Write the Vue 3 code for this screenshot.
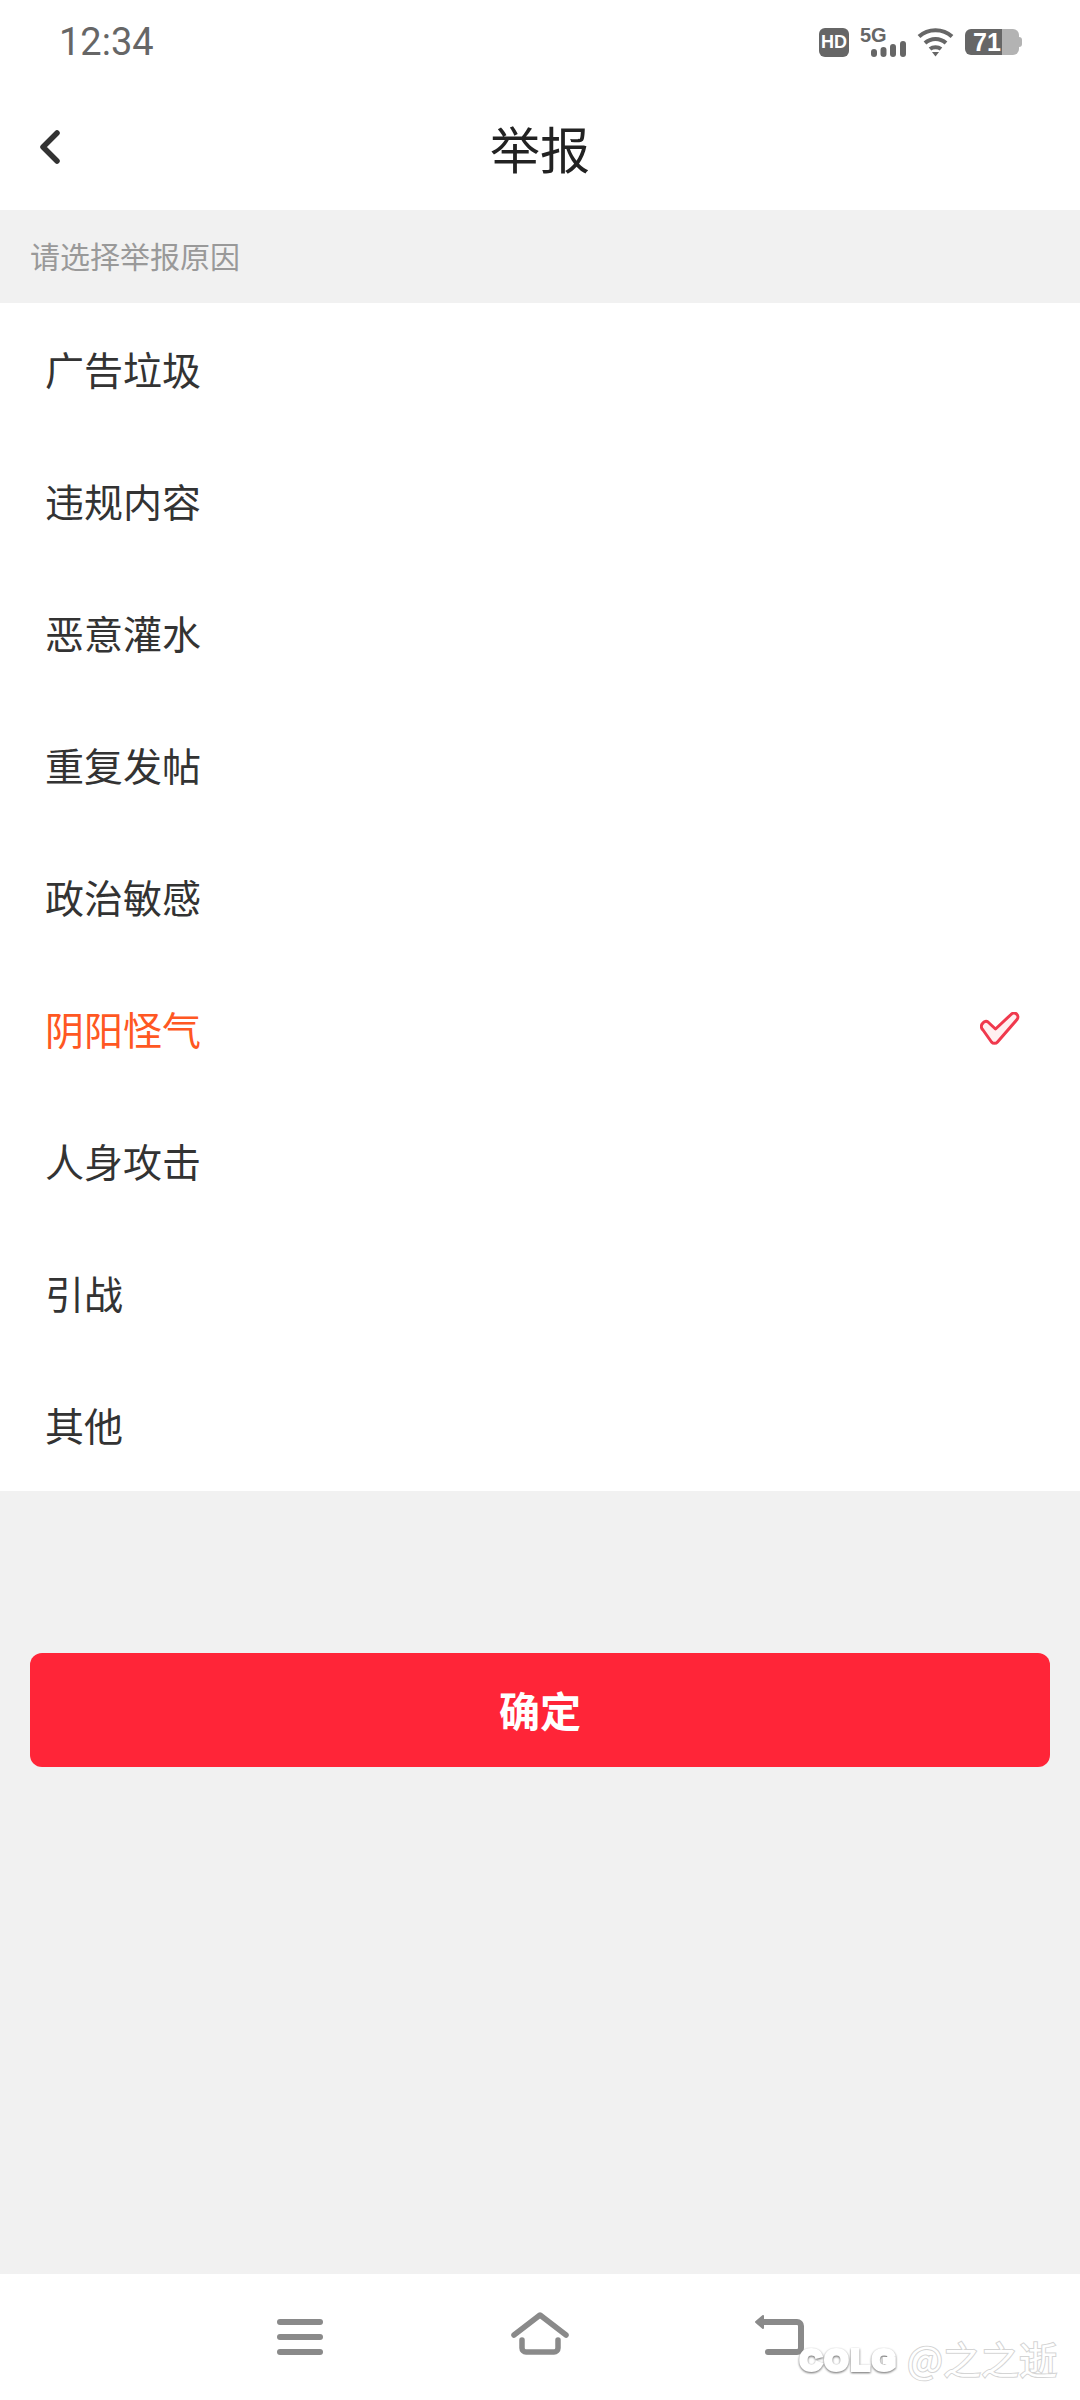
<script setup>
import { ref } from 'vue';

const reasons = ['广告垃圾', '违规内容', '恶意灌水', '重复发帖', '政治敏感', '阴阳怪气', '人身攻击', '引战', '其他'];
const selected = ref('阴阳怪气');
</script>

<template>
  <div class="page">
    <div class="status">
      <span class="time">12:34</span>
      <div class="status-icons">
        <span class="hd">HD</span>
        <div class="signal">
          <span class="five-g">5G</span>
          <svg class="bars" width="35" height="16" viewBox="0 0 35 16">
            <rect x="0" y="8" width="6" height="8" rx="3" />
            <rect x="9.500" y="6" width="6" height="10" rx="3" />
            <rect x="19" y="3" width="6" height="13" rx="3" />
            <rect x="29" y="0" width="6" height="16" rx="3" />
          </svg>
        </div>
        <svg class="wifi" width="37" height="30" viewBox="0 0 37 30" fill="none" stroke="#666" stroke-width="4">
          <path d="M2 9.500C11 1 26 1 35 9.500" />
          <path d="M8 16C14 10.500 23 10.500 29 16" />
          <path d="M13 22C16 19.500 21 19.500 24 22" />
          <path d="M15 25h7l-3.500 4.500z" fill="#666" stroke="none" />
        </svg>
        <div class="battery">
          <span class="level">71</span>
          <span class="cap"></span>
        </div>
      </div>
    </div>

    <header class="header">
      <svg class="back" width="22" height="34" viewBox="0 0 22 34" fill="none" stroke="#333" stroke-width="5.500" stroke-linecap="round" stroke-linejoin="round">
        <path d="M18 3L4 17l14 14" />
      </svg>
      <h1 class="title">举报</h1>
    </header>

    <main class="main">
      <div class="hint">请选择举报原因</div>
      <ul class="list">
        <li
          v-for="item in reasons"
          :key="item"
          :class="{ row: true, active: item === selected }"
          @click="selected = item"
        >
          <span class="label">{{ item }}</span>
          <svg v-if="item === selected" class="check" width="40" height="34" viewBox="0 0 40 34" fill="#fff0f1" stroke="#f0394d" stroke-width="3" stroke-linejoin="round">
            <path d="M3 11a3.500 3.500 0 0 1 5-1l7.500 7L31 2.500a3.500 3.500 0 0 1 6 5L17.500 30a4 4 0 0 1-6 0L3 18a4.500 4.500 0 0 1 0-7z" />
          </svg>
        </li>
      </ul>
      <button class="confirm" type="button">确定</button>
    </main>

    <nav class="nav">
      <svg width="60" height="50" viewBox="0 0 60 50" fill="#8a8a8a">
        <rect x="7" y="7" width="46" height="6" rx="3" />
        <rect x="7" y="22" width="46" height="6" rx="3" />
        <rect x="7" y="37" width="46" height="6" rx="3" />
      </svg>
      <svg width="60" height="50" viewBox="0 0 60 50" fill="none" stroke="#8a8a8a" stroke-width="5.500" stroke-linecap="round" stroke-linejoin="round">
        <path d="M4 23L30 3l26 20" />
        <path d="M12 28v8a4 4 0 0 0 4 4h28a4 4 0 0 0 4-4v-8" />
      </svg>
      <svg width="60" height="50" viewBox="0 0 60 50" fill="none" stroke="#8a8a8a" stroke-width="6" stroke-linecap="round" stroke-linejoin="round">
        <path d="M10 10h37a4 4 0 0 1 4 4v22a4 4 0 0 1-4 4H18" />
        <path d="M6 10l7-6v12z" fill="#8a8a8a" stroke-width="2" />
      </svg>
      <div class="watermark">
        <span class="colg">COLG</span>
        <span class="author">@之之逝</span>
      </div>
    </nav>
  </div>
</template>

<style scoped>
.page {
  width: 1080px;
  height: 2400px;
  display: flex;
  flex-direction: column;
  background: #fff;
  font-family: "Noto Sans CJK SC", "Noto Sans", sans-serif;
  overflow: hidden;
}
.status {
  height: 84px;
  flex: none;
  display: flex;
  align-items: center;
  justify-content: space-between;
  padding: 0 61px 0 59px;
}
.time {
  font-family: Roboto, sans-serif;
  font-size: 38px;
  color: #666;
}
.status-icons {
  display: flex;
  align-items: center;
  gap: 11px;
}
.hd {
  width: 30px;
  height: 29px;
  border-radius: 6px;
  background: #666;
  color: #fff;
  font-family: "Liberation Sans", sans-serif;
  font-weight: 700;
  font-size: 18px;
  line-height: 29px;
  text-align: center;
}
.signal {
  width: 46px;
  height: 29px;
  position: relative;
}
.five-g {
  position: absolute;
  left: 0;
  top: -3px;
  font-family: "Liberation Sans", sans-serif;
  font-weight: 700;
  font-size: 20px;
  line-height: 20px;
  color: #666;
}
.bars {
  position: absolute;
  right: 0;
  bottom: 0;
  fill: #666;
}
.battery {
  width: 54px;
  height: 26px;
  border-radius: 6px;
  background: linear-gradient(to right, #666 37px, #b3b3b3 37px);
  position: relative;
}
.level {
  display: block;
  width: 37px;
  padding-left: 8px;
  color: #fff;
  font-family: "Liberation Sans", sans-serif;
  font-weight: 700;
  font-size: 25px;
  line-height: 26px;
}
.cap {
  position: absolute;
  right: -3px;
  top: 8px;
  width: 3px;
  height: 10px;
  border-radius: 0 3px 3px 0;
  background: #b3b3b3;
}
.header {
  height: 126px;
  flex: none;
  display: flex;
  align-items: center;
  justify-content: center;
  position: relative;
}
.back {
  position: absolute;
  left: 39px;
  top: 46px;
}
.title {
  margin: 0;
  font-size: 50px;
  font-weight: 400;
  color: #222;
}
.main {
  flex: 1;
  background: #f1f1f1;
  display: flex;
  flex-direction: column;
}
.hint {
  box-sizing: border-box;
  height: 93px;
  padding: 0 0 3px 30px;
  display: flex;
  align-items: center;
  font-size: 30px;
  color: #999;
}
.list {
  list-style: none;
  margin: 0;
  padding: 0;
  background: #fff;
}
.row {
  height: 132px;
  display: flex;
  align-items: center;
  justify-content: space-between;
  padding: 0 60px 0 45px;
  font-size: 39px;
  color: #333;
}
.label {
  padding-bottom: 3px;
}
.row.active {
  color: #ff5722;
}
.confirm {
  height: 114px;
  margin: 162px 30px 0;
  padding: 0 0 2px;
  border: none;
  border-radius: 12px;
  background: #ff2538;
  color: #fff;
  font-family: inherit;
  font-size: 41px;
  font-weight: 700;
}
.nav {
  height: 126px;
  flex: none;
  position: relative;
  display: flex;
  align-items: center;
  justify-content: center;
  gap: 180px;
  background: #fff;
}
.watermark {
  position: absolute;
  left: 800px;
  top: 62px;
  display: flex;
  align-items: center;
  color: #fff;
  white-space: nowrap;
}
.colg {
  width: 107px;
  margin-top: 4px;
  font-family: "Liberation Sans", sans-serif;
  font-weight: 700;
  font-size: 30px;
  line-height: 40px;
  letter-spacing: 3px;
  -webkit-text-stroke: 4px #fff;
  paint-order: stroke fill;
  filter: drop-shadow(0 1px 1px #666);
}
.author {
  font-size: 38px;
  line-height: 40px;
  -webkit-text-stroke: 2px #d4d4d4;
  paint-order: stroke fill;
}
</style>
